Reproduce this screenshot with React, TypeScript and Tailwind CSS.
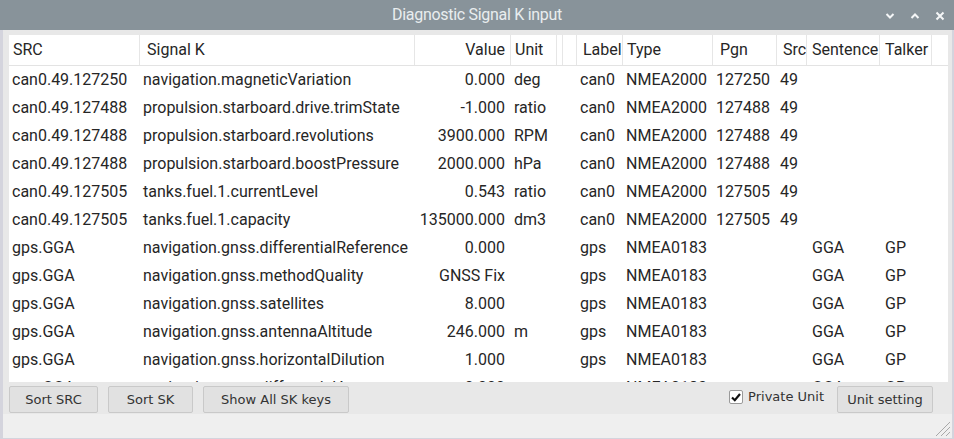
import React from 'react';

type Row = {
  src: string;
  sk: string;
  value: string;
  unit: string;
  label: string;
  type: string;
  pgn: string;
  srcId: string;
  sentence: string;
  talker: string;
};

const can = (src: string, sk: string, value: string, unit: string, pgn: string): Row => ({
  src,
  sk,
  value,
  unit,
  label: 'can0',
  type: 'NMEA2000',
  pgn,
  srcId: '49',
  sentence: '',
  talker: '',
});

const gps = (sk: string, value: string, unit = ''): Row => ({
  src: 'gps.GGA',
  sk,
  value,
  unit,
  label: 'gps',
  type: 'NMEA0183',
  pgn: '',
  srcId: '',
  sentence: 'GGA',
  talker: 'GP',
});

const rows: Row[] = [
  can('can0.49.127250', 'navigation.magneticVariation', '0.000', 'deg', '127250'),
  can('can0.49.127488', 'propulsion.starboard.drive.trimState', '-1.000', 'ratio', '127488'),
  can('can0.49.127488', 'propulsion.starboard.revolutions', '3900.000', 'RPM', '127488'),
  can('can0.49.127488', 'propulsion.starboard.boostPressure', '2000.000', 'hPa', '127488'),
  can('can0.49.127505', 'tanks.fuel.1.currentLevel', '0.543', 'ratio', '127505'),
  can('can0.49.127505', 'tanks.fuel.1.capacity', '135000.000', 'dm3', '127505'),
  gps('navigation.gnss.differentialReference', '0.000'),
  gps('navigation.gnss.methodQuality', 'GNSS Fix'),
  gps('navigation.gnss.satellites', '8.000'),
  gps('navigation.gnss.antennaAltitude', '246.000', 'm'),
  gps('navigation.gnss.horizontalDilution', '1.000'),
  gps('navigation.gnss.differentialAge', '0.000'),
];

const HeaderCell = ({ w, children, right }: { w: string; children?: React.ReactNode; right?: boolean }) => (
  <div className={`${w} shrink-0 h-full flex items-center overflow-hidden whitespace-nowrap border-r border-[#e6e6e6] ${right ? 'justify-end pr-[5px]' : 'pl-[4px]'}`}>
    {children}
  </div>
);

const Cell = ({ w, children, right }: { w: string; children?: React.ReactNode; right?: boolean }) => (
  <div className={`${w} shrink-0 whitespace-nowrap overflow-hidden ${right ? 'text-right pr-[6px]' : 'pl-[3px]'}`}>
    {children}
  </div>
);

const Button = ({ w, children }: { w: string; children: React.ReactNode }) => (
  <button className={`${w} h-[27px] bg-[#e1e1e1] border border-[#c9c9c9] rounded-[2px] text-[#333] text-[13px]`}>
    {children}
  </button>
);

export default function App() {
  return (
    <div className="w-[954px] h-[439px] flex flex-col bg-[#e8e8e8] overflow-hidden" style={{ fontFamily: 'Roboto, sans-serif' }}>
      {/* title bar */}
      <div className="h-[30px] shrink-0 bg-[#88939a] relative flex items-center justify-center">
        <span className="text-[16px] text-[#e9edef] tracking-[-0.3px]">Diagnostic Signal K input</span>
        <div className="absolute right-[9px] top-[11px] flex items-center gap-[15px]">
          <svg width="10" height="8" viewBox="0 0 10 8">
            <path d="M1.5 2 L5 5.5 L8.5 2" stroke="#f4f6f7" strokeWidth="2" fill="none" />
          </svg>
          <svg width="10" height="8" viewBox="0 0 10 8">
            <path d="M1.5 6 L5 2.5 L8.5 6" stroke="#f4f6f7" strokeWidth="2" fill="none" />
          </svg>
          <svg width="10" height="10" viewBox="0 0 10 10">
            <path d="M1.5 1.5 L8.5 8.5 M8.5 1.5 L1.5 8.5" stroke="#f4f6f7" strokeWidth="2" fill="none" />
          </svg>
        </div>
      </div>

      <div className="flex-1 flex border-l-[3px] border-r-[2px] border-b border-[#d4d4dd]">
        <div className="flex-1 flex flex-col">
          {/* table */}
          <div className="mt-[5px] ml-[6px] mr-[4px] h-[347px] bg-white overflow-hidden text-[16px] text-[#262626]">
            <div className="h-[31px] flex border-b border-[#e3e3e3]">
              <HeaderCell w="w-[131px]">SRC</HeaderCell>
              <HeaderCell w="w-[275px]"><span className="pl-[3px]">Signal K</span></HeaderCell>
              <HeaderCell w="w-[96px]" right>Value</HeaderCell>
              <HeaderCell w="w-[46px]">Unit</HeaderCell>
              <HeaderCell w="w-[6px]" />
              <HeaderCell w="w-[14px]" />
              <HeaderCell w="w-[46px]"><span className="pl-[2px]">Label</span></HeaderCell>
              <HeaderCell w="w-[90px]">Type</HeaderCell>
              <HeaderCell w="w-[64px]"><span className="pl-[3px]">Pgn</span></HeaderCell>
              <HeaderCell w="w-[30px]"><span className="pl-[2px]">Src</span></HeaderCell>
              <HeaderCell w="w-[73px]"><span className="pl-[1px]">Sentence</span></HeaderCell>
              <HeaderCell w="w-[52px]"><span className="pl-[1px]">Talker</span></HeaderCell>
            </div>
            {rows.map((r, i) => (
              <div key={i} className="h-[28px] flex items-center">
                <Cell w="w-[131px]">{r.src}</Cell>
                <Cell w="w-[275px]">{r.sk}</Cell>
                <Cell w="w-[96px]" right>{r.value}</Cell>
                <Cell w="w-[46px]">{r.unit}</Cell>
                <Cell w="w-[20px]" />
                <Cell w="w-[46px]">{r.label}</Cell>
                <Cell w="w-[90px]">{r.type}</Cell>
                <Cell w="w-[64px]">{r.pgn}</Cell>
                <Cell w="w-[30px]">{r.srcId}</Cell>
                <Cell w="w-[73px]"><span className="pl-[2px]">{r.sentence}</span></Cell>
                <Cell w="w-[52px]"><span className="pl-[2px]">{r.talker}</span></Cell>
              </div>
            ))}
          </div>

          {/* buttons */}
          <div className="h-[32px] flex items-center pl-[6px] pr-[19px] pt-[3px]" style={{ fontFamily: '"DejaVu Sans", sans-serif' }}>
            <Button w="w-[89px]">Sort SRC</Button>
            <div className="w-[10px]" />
            <Button w="w-[85px]">Sort SK</Button>
            <div className="w-[10px]" />
            <Button w="w-[146px]">Show All SK keys</Button>
            <div className="flex-1" />
            <label className="flex items-center gap-[5px] text-[13px] text-[#333] mr-[13px] -mt-[5px]">
              <span className="w-[14px] h-[14px] bg-white border border-[#9a9a9a] rounded-[2px] flex items-center justify-center">
                <svg width="12" height="12" viewBox="0 0 12 12">
                  <path d="M2 6.5 L4.8 9.2 L10 3" stroke="#111" strokeWidth="2.2" fill="none" />
                </svg>
              </span>
              Private Unit
            </label>
            <Button w="w-[96px]">Unit setting</Button>
          </div>

          {/* status bar */}
          <div className="flex-1 bg-[#efefef] relative">
            <svg className="absolute right-[1px] bottom-[1px]" width="18" height="18" viewBox="0 0 18 18">
              <path d="M17 3 L3 17 M17 8 L8 17 M17 13 L13 17" stroke="#a8a8a8" strokeWidth="1" />
            </svg>
          </div>
        </div>
      </div>
    </div>
  );
}
